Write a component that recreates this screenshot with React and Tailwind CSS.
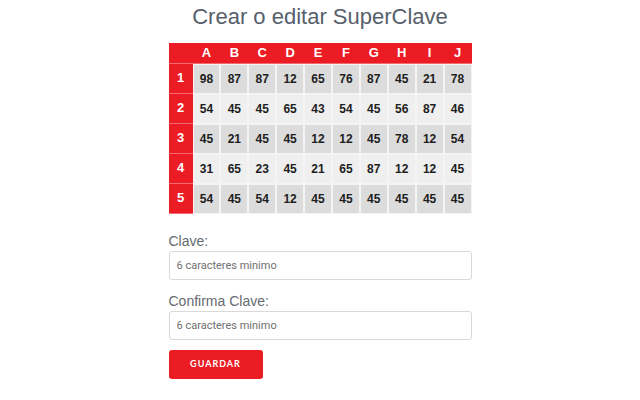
import React from "react";

const cols = ["A", "B", "C", "D", "E", "F", "G", "H", "I", "J"];
const rows = [
  [98, 87, 87, 12, 65, 76, 87, 45, 21, 78],
  [54, 45, 45, 65, 43, 54, 45, 56, 87, 46],
  [45, 21, 45, 45, 12, 12, 45, 78, 12, 54],
  [31, 65, 23, 45, 21, 65, 87, 12, 12, 45],
  [54, 45, 54, 12, 45, 45, 45, 45, 45, 45],
];

export default function App() {
  return (
    <div className="min-h-screen bg-white font-['Liberation_Sans',Arial,sans-serif]">
      <div className="w-[303px] mx-auto pt-[3px]">
        <h1 className="text-center text-[22px] leading-[28px] text-[#56606c] -mx-10">
          Crear o editar SuperClave
        </h1>

        <table className="mt-[12px] w-[303px] table-fixed border-separate border-spacing-0">
          <colgroup>
            <col className="w-[24px]" />
            {cols.map((c) => (
              <col key={c} />
            ))}
          </colgroup>
          <thead>
            <tr className="bg-[#ec1c24] h-[20px]">
              <th className="border-b border-[#f26a6f]"></th>
              {cols.map((c) => (
                <th key={c} className="text-white text-[13px] font-bold text-center border-b border-[#f26a6f]">
                  {c}
                </th>
              ))}
            </tr>
          </thead>
          <tbody>
            {rows.map((r, i) => (
              <tr key={i} className="h-[30px]">
                <td className="bg-[#ec1c24] text-white text-[13px] font-bold text-center border-b border-[#f26a6f] last:border-b-0">
                  {i + 1}
                </td>
                {r.map((v, j) => (
                  <td
                    key={j}
                    className={
                      "text-center text-[12px] font-bold text-[#1e1e1e] border border-[#f4f4f4] " +
                      (i % 2 === 0 ? "bg-[#dcdcdc]" : "bg-[#efefef]")
                    }
                  >
                    {v}
                  </td>
                ))}
              </tr>
            ))}
          </tbody>
        </table>

        <div className="mt-[18px]">
          <label className="block text-[14px] leading-[18px] text-[#666b70]">Clave:</label>
          <input
            type="password"
            placeholder="6 caracteres minimo"
            className="mt-[1px] w-full h-[29px] rounded-[3px] border border-[#d9d9d9] px-[7px] text-[11px] font-['Roboto',sans-serif] placeholder:text-[#707070] outline-none"
          />
        </div>

        <div className="mt-[12px]">
          <label className="block text-[14px] leading-[18px] text-[#666b70]">Confirma Clave:</label>
          <input
            type="password"
            placeholder="6 caracteres minimo"
            className="mt-[1px] w-full h-[29px] rounded-[3px] border border-[#d9d9d9] px-[7px] text-[11px] font-['Roboto',sans-serif] placeholder:text-[#707070] outline-none"
          />
        </div>

        <button className="mt-[10px] w-[94px] h-[29px] rounded-[3px] bg-[#ec1c24] text-white text-[9px] font-bold tracking-[1px] font-['Lato',sans-serif]">
          GUARDAR
        </button>
      </div>
    </div>
  );
}
